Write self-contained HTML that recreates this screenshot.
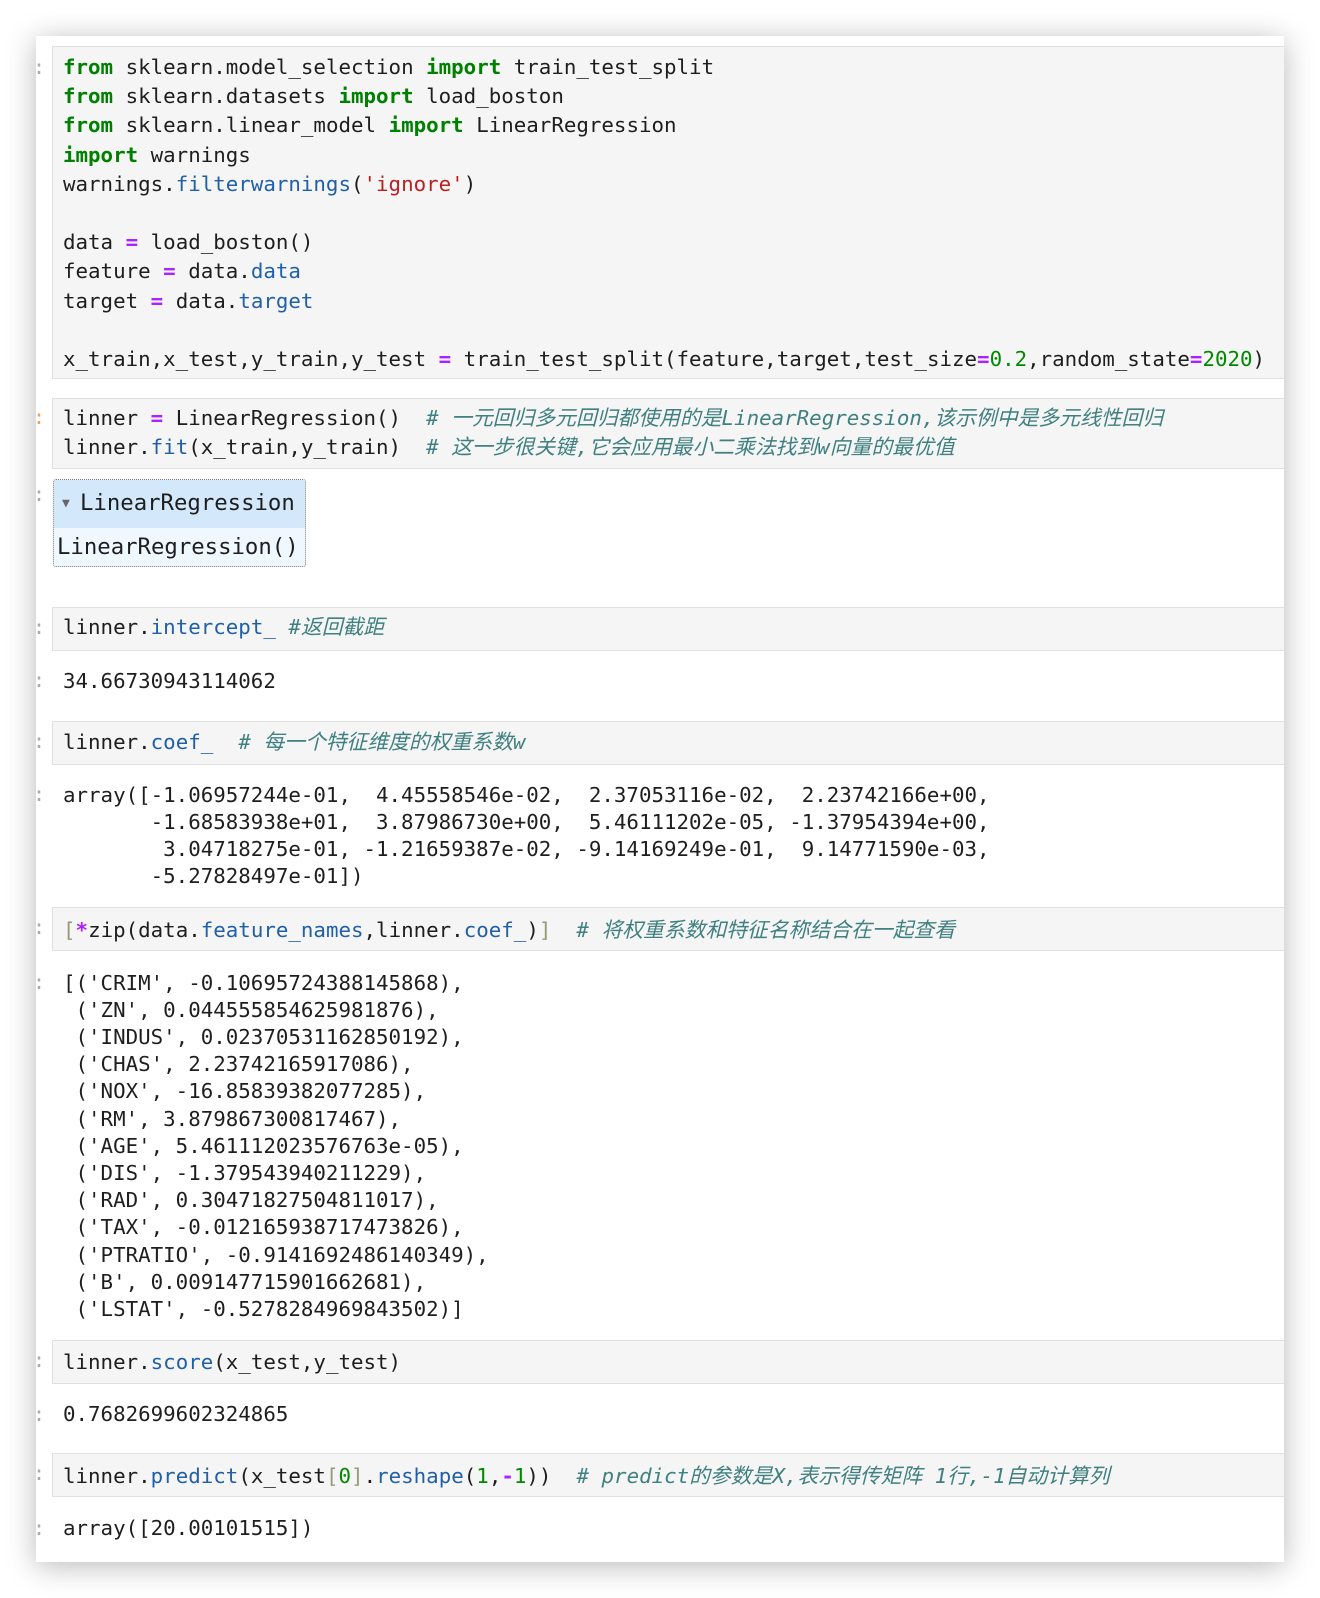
<!DOCTYPE html>
<html><head><meta charset="utf-8">
<style>
body{margin:0;width:1320px;height:1598px;background:#fff;position:relative;overflow:hidden;font-family:"DejaVu Sans Mono","Noto Sans CJK SC",monospace;}
.card{position:absolute;left:36px;top:36px;width:1248px;height:1526px;background:#fff;box-shadow:0 4px 28px rgba(0,0,0,.28);overflow:hidden;}
.box{position:absolute;left:16px;width:1240px;background:#f5f5f5;border:1px solid #e0e0e0;border-right:none;box-sizing:border-box;}
pre{position:absolute;margin:0;left:27px;font-family:"DejaVu Sans Mono","Noto Sans CJK SC",monospace;font-size:20.8px;color:#1e1e1e;white-space:pre;}
pre.in{line-height:29.2px;}
pre.out{line-height:27.2px;}
.p{position:absolute;left:-3px;font-size:20px;color:#aaa;font-family:"DejaVu Sans Mono",monospace;}
.k{color:#008000;font-weight:bold}
.s{color:#ba2121}
.o{color:#aa22ff;font-weight:bold}
.n{color:#008800}
.b{color:#2060a8}
.c{color:#408080;font-style:italic;font-family:"DejaVu Sans Mono","Noto Sans CJK SC",monospace}
.br{color:#999977}
.w{position:absolute;left:17px;top:443px;width:253px;height:88px;border:1px dotted #777;border-radius:3px;background:#f0f8ff;box-sizing:border-box;overflow:hidden;}
.wh{position:absolute;left:0;top:0;width:100%;height:48px;background:#d4e8fb;}
.w pre{font-size:22.3px;}
</style></head><body>
<div class="card">
<div class="box" style="top:10px;height:333px"></div>
<span class="p" style="top:19px">:</span>
<pre class="in" style="top:17px"><span class="k">from</span> sklearn.model_selection <span class="k">import</span> train_test_split
<span class="k">from</span> sklearn.datasets <span class="k">import</span> load_boston
<span class="k">from</span> sklearn.linear_model <span class="k">import</span> LinearRegression
<span class="k">import</span> warnings
warnings.<span class="b">filterwarnings</span>(<span class="s">'ignore'</span>)

data <span class="o">=</span> load_boston()
feature <span class="o">=</span> data.<span class="b">data</span>
target <span class="o">=</span> data.<span class="b">target</span>

x_train,x_test,y_train,y_test <span class="o">=</span> train_test_split(feature,target,test_size<span class="o">=</span><span class="n">0.2</span>,random_state<span class="o">=</span><span class="n">2020</span>)</pre>

<div class="box" style="top:362px;height:71px"></div>
<span class="p" style="top:369px;color:#f0a060">:</span>
<pre class="in" style="top:367.5px">linner <span class="o">=</span> LinearRegression()  <span class="c"># 一元回归多元回归都使用的是LinearRegression,该示例中是多元线性回归</span>
linner.<span class="b">fit</span>(x_train,y_train)  <span class="c"># 这一步很关键,它会应用最小二乘法找到w向量的最优值</span></pre>

<span class="p" style="top:446px">:</span>
<div class="w"><div class="wh"></div>
<span style="position:absolute;left:8px;top:16px;font-size:13px;color:#666">▼</span>
<pre style="left:26px;top:9px;line-height:29px">LinearRegression</pre>
<pre style="left:3px;top:53px;line-height:29px">LinearRegression()</pre>
</div>

<div class="box" style="top:571px;height:44px"></div>
<span class="p" style="top:579px">:</span>
<pre class="in" style="top:577px">linner.<span class="b">intercept_</span> <span class="c">#返回截距</span></pre>
<span class="p" style="top:632px">:</span>
<pre class="out" style="top:631.5px">34.66730943114062</pre>

<div class="box" style="top:685px;height:44px"></div>
<span class="p" style="top:693px">:</span>
<pre class="in" style="top:692px">linner.<span class="b">coef_</span>  <span class="c"># 每一个特征维度的权重系数w</span></pre>
<span class="p" style="top:746px">:</span>
<pre class="out" style="top:745.5px">array([-1.06957244e-01,  4.45558546e-02,  2.37053116e-02,  2.23742166e+00,
       -1.68583938e+01,  3.87986730e+00,  5.46111202e-05, -1.37954394e+00,
        3.04718275e-01, -1.21659387e-02, -9.14169249e-01,  9.14771590e-03,
       -5.27828497e-01])</pre>

<div class="box" style="top:871px;height:44px"></div>
<span class="p" style="top:879px">:</span>
<pre class="in" style="top:880px"><span class="br">[</span><span class="o">*</span>zip(data.<span class="b">feature_names</span>,linner.<span class="b">coef_</span>)<span class="br">]</span>  <span class="c"># 将权重系数和特征名称结合在一起查看</span></pre>
<span class="p" style="top:934px">:</span>
<pre class="out" style="top:933.5px">[('CRIM', -0.10695724388145868),
 ('ZN', 0.044555854625981876),
 ('INDUS', 0.02370531162850192),
 ('CHAS', 2.23742165917086),
 ('NOX', -16.85839382077285),
 ('RM', 3.879867300817467),
 ('AGE', 5.461112023576763e-05),
 ('DIS', -1.379543940211229),
 ('RAD', 0.30471827504811017),
 ('TAX', -0.012165938717473826),
 ('PTRATIO', -0.9141692486140349),
 ('B', 0.009147715901662681),
 ('LSTAT', -0.5278284969843502)]</pre>

<div class="box" style="top:1304px;height:44px"></div>
<span class="p" style="top:1312px">:</span>
<pre class="in" style="top:1312px">linner.<span class="b">score</span>(x_test,y_test)</pre>
<span class="p" style="top:1366px">:</span>
<pre class="out" style="top:1364.5px">0.7682699602324865</pre>

<div class="box" style="top:1417px;height:44px"></div>
<span class="p" style="top:1425px">:</span>
<pre class="in" style="top:1426px">linner.<span class="b">predict</span>(x_test<span class="br">[</span><span class="n">0</span><span class="br">]</span>.<span class="b">reshape</span>(<span class="n">1</span>,<span class="o">-</span><span class="n">1</span>))  <span class="c"># predict的参数是X,表示得传矩阵 1行,-1自动计算列</span></pre>
<span class="p" style="top:1480px">:</span>
<pre class="out" style="top:1479px">array([20.00101515])</pre>
</div>
</body></html>
